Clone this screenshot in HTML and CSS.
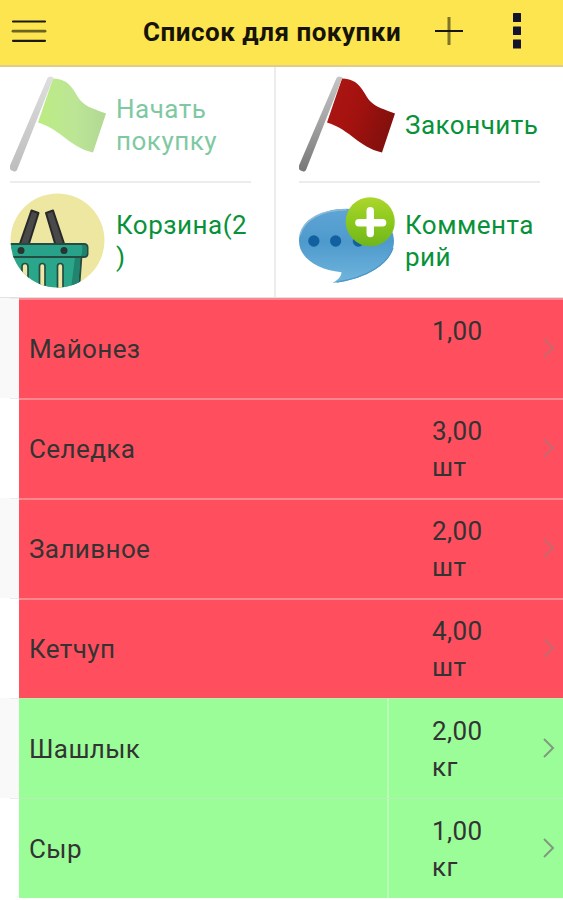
FILE: index.html
```html
<!DOCTYPE html>
<html lang="ru">
<head>
  <meta charset="UTF-8" />
  <meta name="viewport" content="width=device-width, initial-scale=1" />
  <title>Список для покупки</title>
  <link rel="stylesheet" href="styles.css">
</head>
<body>
  <header class="toolbar">
    <svg class="menu-icon" width="36" height="26" viewBox="0 0 36 26" fill="none" stroke-width="2.2" stroke-linecap="round"><path d="M2 3.500h32M2 22.800h32" stroke="#1a1a10"/><path d="M2 13.200h32" stroke="#6b6425" stroke-width="2.800"/></svg>
    <h1 class="title">Список для покупки</h1>
    <svg class="plus-icon" width="30" height="30" viewBox="0 0 30 30"><path d="M15 1v28" stroke="#7f7329" stroke-width="3"/><path d="M1 15h28" stroke="#15150c" stroke-width="2"/></svg>
    <svg class="more-icon" width="8" height="36" viewBox="0 0 8 36" fill="#12142a"><rect width="8" height="9" rx=".5"/><rect y="13.500" width="8" height="8.500" rx=".5"/><rect y="26.500" width="8" height="9" rx=".5"/></svg>
  </header>

  <div class="actions">
    <div class="column">
      <div class="action disabled">
        <svg class="icon" width="96" height="96" viewBox="0 0 96 96">
          <defs>
            <linearGradient id="green" x1="0" x2="1"><stop offset="0" stop-color="#bcec82"/><stop offset=".55" stop-color="#bce596"/><stop offset="1" stop-color="#b2d893"/></linearGradient>
            <linearGradient id="poleLight" x1="0" y1="0" x2="0" y2="1"><stop offset="0" stop-color="#dedede"/><stop offset="1" stop-color="#bdbdbd"/></linearGradient>
          </defs>
          <path d="M43 2.500C61 2.500 64 17 71 25C76 31 87 34 96 37.500L83 76.500C59 71 52 54 28 46.500Z" fill="url(#green)"/>
          <path d="M37.500 2Q38.500.2 40.500.4L43.500 1.500L7 94Q5.500 96.500 3 95Q-1 94-.2 90Z" fill="url(#poleLight)"/>
        </svg>
        <span class="label">Начать покупку</span>
      </div>
      <div class="action">
        <svg class="icon" width="96" height="96" viewBox="0 0 96 96">
          <defs><clipPath id="round"><circle cx="47.500" cy="47.500" r="47"/></clipPath></defs>
          <g clip-path="url(#round)">
            <rect width="96" height="96" fill="#ede7a2"/>
            <g fill="#494949" stroke="#292929" stroke-width="2" stroke-linejoin="round">
              <path d="M21.500 17.500L28.500 20L18.500 52H9.500Z"/>
              <path d="M36 20L43 17.500L54.500 52H45.500Z"/>
            </g>
            <path d="M2 62H71.500L69 96H5Z" fill="#2aa68a" stroke="#264b42" stroke-width="2"/>
            <path d="M65 64H70.500L68 96H61Z" fill="#20846e"/>
            <path d="M-3 51H74Q77.500 51 77.500 54.500V60.500Q77.500 64 74 64H-3Z" fill="#28a389" stroke="#254b42" stroke-width="2"/>
            <path d="M72 52h2.500q2 0 2 3v5q0 3-3 3h-2.500q2-4 1-11Z" fill="#1d836c"/>
            <circle cx="11" cy="57.500" r="3.500" fill="#29342f"/><circle cx="54" cy="57.500" r="3.500" fill="#29342f"/>
            <g fill="#eee7a5" stroke="#244c42" stroke-width="1.700">
              <rect x="12" y="70.500" width="6" height="30" rx="3"/><rect x="29.500" y="70.500" width="5.500" height="30" rx="2.700"/><rect x="47.500" y="70.500" width="5.500" height="30" rx="2.700"/>
            </g>
          </g>
        </svg>
        <span class="label">Корзина(2)</span>
      </div>
    </div>
    <div class="column">
      <div class="action">
        <svg class="icon" width="96" height="96" viewBox="0 0 96 96">
          <defs>
            <linearGradient id="red" x1="0" x2="1" y2=".4"><stop offset="0" stop-color="#ad1713"/><stop offset=".5" stop-color="#a4120f"/><stop offset="1" stop-color="#84100d"/></linearGradient>
            <linearGradient id="pole" x1="0" y1="0" x2="0" y2="1"><stop offset="0" stop-color="#c4c4c4"/><stop offset=".4" stop-color="#aaa"/><stop offset="1" stop-color="#777"/></linearGradient>
          </defs>
          <path d="M43 2.500C61 2.500 64 17 71 25C76 31 87 34 96 37.500L83 76.500C59 71 52 54 28 46.500Z" fill="url(#red)"/>
          <path d="M37.500 2Q38.500.2 40.500.4L43.500 1.500L7 94Q5.500 96.500 3 95Q-1 94-.2 90Z" fill="url(#pole)"/>
        </svg>
        <span class="label">Закончить</span>
      </div>
      <div class="action">
        <svg class="icon" width="96" height="96" viewBox="0 0 97 96">
          <defs>
            <linearGradient id="bubble" x1="0" y1="0" x2="0" y2="1"><stop offset="0" stop-color="#5fa4d5"/><stop offset=".45" stop-color="#4e9acd"/><stop offset="1" stop-color="#70b5dd"/></linearGradient>
            <linearGradient id="lime" x1="0" y1="0" x2="0" y2="1"><stop offset="0" stop-color="#add52d"/><stop offset=".5" stop-color="#8bc91d"/><stop offset="1" stop-color="#70b51c"/></linearGradient>
          </defs>
          <path d="M48 15.500C75 15.500 96 28 96 48C96 68 73 86 34 90.500Q43 85 43 79.500C17 77 0 64 0 48C0 29 21 15.500 48 15.500Z" fill="url(#bubble)"/>
          <path d="M1 42C5 26 23 16.500 48 16.500" fill="none" stroke="#8cbcda" stroke-width="1.500"/>
          <path d="M95 55C90 71 69 85 38 89.500" fill="none" stroke="#4c97c5" stroke-width="1.200"/>
          <g fill="#12609f"><circle cx="15" cy="48" r="5.700"/><circle cx="37" cy="48" r="5.700"/><circle cx="60" cy="48" r="5.700"/></g>
          <circle cx="72" cy="28.500" r="24.800" fill="url(#lime)"/>
          <path d="M72 17.500v23M60.500 29.500h24" stroke="#fff" stroke-width="7.500" stroke-linecap="round"/>
        </svg>
        <span class="label">Комментарий</span>
      </div>
    </div>
  </div>

  <ul class="list">
    <li class="item missing">
      <div class="row"><span class="name">Майонез</span><span class="amount">1,00</span><svg class="arrow" width="14" height="22" viewBox="0 0 14 22"><path d="M2 2l9 9-9 9"/></svg></div>
    </li>
    <li class="item missing">
      <div class="row"><span class="name">Селедка</span><span class="amount">3,00<br>шт</span><svg class="arrow" width="14" height="22" viewBox="0 0 14 22"><path d="M2 2l9 9-9 9"/></svg></div>
    </li>
    <li class="item missing">
      <div class="row"><span class="name">Заливное</span><span class="amount">2,00<br>шт</span><svg class="arrow" width="14" height="22" viewBox="0 0 14 22"><path d="M2 2l9 9-9 9"/></svg></div>
    </li>
    <li class="item missing">
      <div class="row"><span class="name">Кетчуп</span><span class="amount">4,00<br>шт</span><svg class="arrow" width="14" height="22" viewBox="0 0 14 22"><path d="M2 2l9 9-9 9"/></svg></div>
    </li>
    <li class="item bought">
      <div class="row"><span class="name">Шашлык</span><span class="amount">2,00<br>кг</span><svg class="arrow" width="14" height="22" viewBox="0 0 14 22"><path d="M2 2l9 9-9 9"/></svg></div>
    </li>
    <li class="item bought">
      <div class="row"><span class="name">Сыр</span><span class="amount">1,00<br>кг</span><svg class="arrow" width="14" height="22" viewBox="0 0 14 22"><path d="M2 2l9 9-9 9"/></svg></div>
    </li>
  </ul>
</body>
</html>
```
FILE: styles.css
```css
* {
  box-sizing: border-box;
}
body {
  margin: 0;
  height: 900px;
  overflow: hidden;
  background: #fff;
  color: #333;
  font-family: Roboto, "Noto Sans", sans-serif;
  font-size: 26px;
  letter-spacing: 0.4px;
}
svg {
  display: block;
  flex: none;
}
.toolbar {
  display: flex;
  align-items: center;
  height: 67px;
  padding: 0 42px 4px 11px;
  background: #fce54e;
  border-bottom: 2px solid #dfcc8b;
}
.title {
  width: 258px;
  margin: 2px 0 0 96px;
  font-size: 26px;
  font-weight: 700;
  letter-spacing: 0.5px;
  white-space: nowrap;
  color: #15130a;
}
.plus-icon {
  margin-left: 33px;
}
.more-icon {
  margin-left: auto;
}
/* четыре кнопки над списком */
.actions {
  display: flex;
  height: 231px;
  border-bottom: 1px solid #e2e2e2;
}
.column {
  width: 276px;
  padding-left: 10px;
  border-right: 2px solid #ececec;
}
.column + .column {
  width: 287px;
  padding-left: 23px;
  border-right: none;
}
.action {
  display: flex;
  align-items: center;
  width: 241px;
  height: 116px;
  border-bottom: 2px solid #ececec;
}
.action:last-child {
  height: 115px;
  border-bottom: none;
}
.label {
  width: 138px;
  margin: 1px -3px 0 10px;
  line-height: 32px;
  letter-spacing: 0.5px;
  color: #079239;
  overflow-wrap: anywhere;
}
.disabled .label {
  color: #7fc9a2;
}
.list {
  margin: 0;
  padding: 0;
  list-style: none;
}
.item {
  height: 100px;
  padding-left: 19px;
  background: linear-gradient(#ececec, #ececec) 10px 0 / 9px 1px no-repeat #fff;
}
.item:nth-child(odd) {
  background-color: #f9f9f9;
}
.row {
  display: flex;
  align-items: center;
  height: 100px;
  padding: 0 7px 0 10px;
  border-top: 1px solid #fff;
}
.missing .row {
  background: #ff4f5e;
  border-top: 2px solid #ff8890;
}
.bought .row {
  background: #9bfd98;
  border-top-color: #b5eeb0;
}
.name {
  width: 358px;
}
.amount {
  align-self: stretch;
  width: 125px;
  padding: 14px 0 0 45px;
  line-height: 36px;
}
.missing .amount {
  padding-top: 13px;
}
.bought .amount {
  border-left: 2px solid #b9ffb6;
  padding-left: 43px;
}
.arrow {
  margin: 0 0 2px 30px;
  fill: none;
  stroke: #7f9a7c;
  stroke-width: 2;
}
.missing .arrow {
  stroke: #c66a70;
}
```
